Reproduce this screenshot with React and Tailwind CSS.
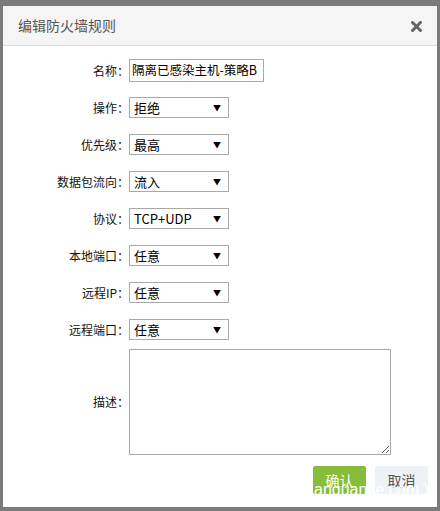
import React from "react";

const font = { fontFamily: '"Noto Sans CJK SC", "Liberation Sans", sans-serif' };

function Label({ children }) {
  return (
    <div className="w-[126px] text-right text-[12px] text-[#111] leading-none pr-0">{children}</div>
  );
}

function Select({ value }) {
  return (
    <div className="w-[100px] h-[21px] border border-[#a9a9a9] bg-white flex items-center justify-between pl-[4px] pr-[7px]">
      <span className="text-[13px] text-black leading-none">{value}</span>
      <span className="text-[8px] text-black leading-none">▼</span>
    </div>
  );
}

export default function App() {
  const rows = [
    ["操作：", "拒绝"],
    ["优先级：", "最高"],
    ["数据包流向：", "流入"],
    ["协议：", "TCP+UDP"],
    ["本地端口：", "任意"],
    ["远程IP：", "任意"],
    ["远程端口：", "任意"],
  ];
  return (
    <div className="w-[440px] h-[511px] bg-[#7b7b7b] pt-[6px] pl-[3px] relative" style={font}>
      <div className="w-[434px] h-[501px] bg-white flex flex-col">
        <div className="h-[40px] bg-[#f5f5f5] border-b border-[#dcdcdc] flex items-center justify-between pl-[15px] pr-[15px]">
          <span className="text-[14px] text-[#555]">编辑防火墙规则</span>
          <svg width="11" height="11" viewBox="0 0 11 11" className="mt-[1px]">
            <path d="M1.5 1.5 L9.5 9.5 M9.5 1.5 L1.5 9.5" stroke="#666" strokeWidth="3" strokeLinecap="square" />
          </svg>
        </div>
        <div className="flex flex-col pt-[13px]">
          <div className="flex items-center h-[23px]">
            <Label>名称：</Label>
            <div className="w-[135px] h-[23px] border border-[#a9a9a9] flex items-center pl-[2px]">
              <span className="text-[12.5px] text-black leading-none whitespace-nowrap">隔离已感染主机-策略B</span>
            </div>
          </div>
          {rows.map(([l, v], i) => (
            <div key={i} className={`flex items-center h-[21px] ${i === 0 ? "mt-[15px]" : "mt-[16px]"}`}>
              <Label>{l}</Label>
              <Select value={v} />
            </div>
          ))}
          <div className="flex items-center mt-[9px]">
            <Label>描述：</Label>
            <textarea className="w-[262px] h-[106px] border border-[#a9a9a9] resize outline-none" />
          </div>
          <div className="flex justify-end gap-[9px] pr-[9px] mt-[11px]">
            <div className="w-[53px] h-[28px] rounded-[2px] bg-[#87bd3b] text-white text-[14px] flex items-start justify-center pt-[4px]">确认</div>
            <div className="w-[53px] h-[28px] rounded-[2px] bg-[#eef1f5] text-[#555] text-[14px] flex items-start justify-center pt-[4px]">取消</div>
          </div>
        </div>
      </div>
      <span className="absolute left-[314px] top-[482px] text-[16px] text-white leading-none whitespace-nowrap" style={{ fontFamily: '"Liberation Sans", sans-serif' }}>
        anquanke.com )
      </span>
    </div>
  );
}
